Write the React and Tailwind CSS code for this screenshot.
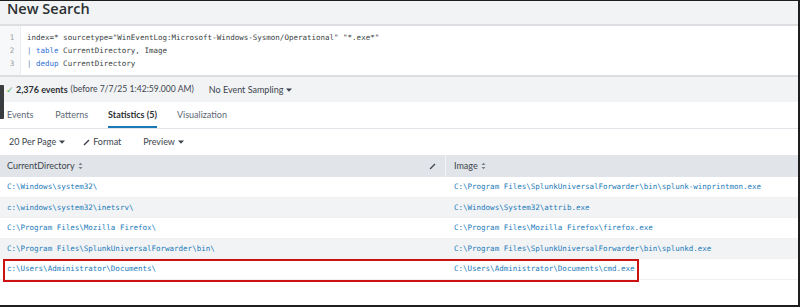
import React from "react";

const ui = { fontFamily: "Lato, 'Open Sans', 'Liberation Sans', sans-serif" };
const mono = { fontFamily: "'DejaVu Sans Mono', 'Liberation Mono', monospace" };
const title = { fontFamily: "'Open Sans', Lato, 'Liberation Sans', sans-serif" };

function Sort() {
  return (
    <svg width="5" height="8" viewBox="0 0 5 8" className="ml-[3px] inline-block">
      <path d="M0.5 3 L2.5 0.8 L4.5 3 Z" fill="#7a8087" />
      <path d="M0.5 5 L2.5 7.2 L4.5 5 Z" fill="#7a8087" />
    </svg>
  );
}

function Caret() {
  return (
    <svg width="6" height="4" viewBox="0 0 6 4" className="ml-[3px] inline-block">
      <path d="M0 0.5 L6 0.5 L3 3.7 Z" fill="#3c444d" />
    </svg>
  );
}

const rows = [
  ["C:\\Windows\\system32\\", "C:\\Program Files\\SplunkUniversalForwarder\\bin\\splunk-winprintmon.exe"],
  ["c:\\windows\\system32\\inetsrv\\", "C:\\Windows\\System32\\attrib.exe"],
  ["C:\\Program Files\\Mozilla Firefox\\", "C:\\Program Files\\Mozilla Firefox\\firefox.exe"],
  ["C:\\Program Files\\SplunkUniversalForwarder\\bin\\", "C:\\Program Files\\SplunkUniversalForwarder\\bin\\splunkd.exe"],
  ["c:\\Users\\Administrator\\Documents\\", "C:\\Users\\Administrator\\Documents\\cmd.exe"],
];

export default function App() {
  return (
    <div
      className="relative w-[800px] h-[307px] overflow-hidden bg-white border-t border-r-2 border-b-2 border-[#1e1e1e] flex flex-col"
      style={ui}
    >
      {/* header */}
      <div className="h-[25px] shrink-0 bg-[#f2f3f5] flex items-start pl-[7px] pt-[1px] border-b-2 border-[#dcdee2]">
        <span className="text-[14.5px] font-semibold text-[#2b3033] leading-[13px]" style={title}>New Search</span>
      </div>

      {/* search box */}
      <div className="h-[51px] shrink-0 flex bg-white border-b-2 border-[#dcdee2]">
        <div className="w-[21px] bg-[#f7f8f9] border-r border-[#eceef0] flex flex-col items-center pt-[4.5px] text-[#9aa0a6] text-[7.5px]" style={mono}>
          <div className="h-[13px] leading-[13px] pl-[4px]">1</div>
          <div className="h-[13px] leading-[13px] pl-[4px]">2</div>
          <div className="h-[13px] leading-[13px] pl-[4px]">3</div>
        </div>
        <div className="pl-[6px] pt-[4.5px] text-[7.5px] text-[#3a3f44] whitespace-pre" style={mono}>
          <div className="h-[13px] leading-[13px]">index=* sourcetype="WinEventLog:Microsoft-Windows-Sysmon/Operational" "*.exe*"</div>
          <div className="h-[13px] leading-[13px]"><span className="text-[#6f88b8]">|</span> <span className="text-[#2e6fd6]">table</span> CurrentDirectory, Image</div>
          <div className="h-[13px] leading-[13px]"><span className="text-[#6f88b8]">|</span> <span className="text-[#2e6fd6]">dedup</span> CurrentDirectory</div>
        </div>
      </div>

      {/* status bar */}
      <div className="h-[25px] shrink-0 bg-[#f2f3f5] flex items-center pl-[6px] text-[8.6px] text-[#3c444d]">
        <span className="text-[#5cb85c] mr-[2px] text-[9px]">✓</span>
        <span className="font-bold text-[#2b3033] text-[9px]">2,376 events</span>
        <span className="ml-[3px]">(before 7/7/25 1:42:59.000 AM)</span>
        <span className="ml-[15px] flex items-center text-[9px]">No Event Sampling<Caret /></span>
      </div>

      {/* tabs */}
      <div className="h-[27px] shrink-0 flex items-end pl-[7px] border-b border-[#e1e4e8] text-[9px] text-[#5c6773]">
        <div className="h-[26px] flex items-center mr-[22px]">Events</div>
        <div className="h-[26px] flex items-center mr-[20px]">Patterns</div>
        <div className="h-[26px] flex items-center mr-[20px] font-bold text-[#2b3033] border-b-2 border-[#1a7ab8] pt-[2px]">Statistics (5)</div>
        <div className="h-[26px] flex items-center">Visualization</div>
      </div>

      {/* toolbar */}
      <div className="h-[26px] shrink-0 flex items-center pl-[9px] text-[9px] text-[#3c444d]">
        <span className="flex items-center">20 Per Page<Caret /></span>
        <span className="ml-[18px] flex items-center">
          <svg width="7" height="7" viewBox="0 0 7 7" className="mr-[3px]"><path d="M1 6 L6 1" stroke="#3c444d" strokeWidth="1.4" /></svg>
          Format
        </span>
        <span className="ml-[22px] flex items-center">Preview<Caret /></span>
      </div>

      {/* table */}
      <div className="flex flex-col">
        <div className="h-[22px] shrink-0 flex bg-[#e1e4e8] text-[9px] text-[#3c444d]">
          <div className="w-[446px] flex items-center justify-between pl-[7px] pr-[9px] border-r border-[#f3f4f6]">
            <span className="flex items-center">CurrentDirectory<Sort /></span>
            <svg width="7" height="7" viewBox="0 0 7 7"><path d="M1 6 L6 1" stroke="#3c444d" strokeWidth="1.3" /></svg>
          </div>
          <div className="flex-1 flex items-center pl-[8px]">
            <span className="flex items-center">Image<Sort /></span>
          </div>
        </div>
        {rows.map((r, i) => (
          <div
            key={i}
            className={`h-[20.5px] shrink-0 flex items-center text-[7.5px] text-[#1a7ab8] border-b border-[#eef0f2] ${i % 2 === 1 ? "bg-[#f2f3f5]" : "bg-white"}`}
            style={mono}
          >
            <div className="w-[446px] pl-[7px] whitespace-pre">{r[0]}</div>
            <div className="flex-1 pl-[8px] whitespace-pre">{r[1]}</div>
          </div>
        ))}
      </div>

      {/* left handle */}
      <div className="absolute left-0 top-[84px] w-[4px] h-[34px] bg-[#3a3d40] rounded-r-[1px]" />

      {/* red highlight */}
      <div className="absolute left-[3px] top-[258px] w-[636px] h-[23px] border-2 border-[#cc1111]" />
    </div>
  );
}
